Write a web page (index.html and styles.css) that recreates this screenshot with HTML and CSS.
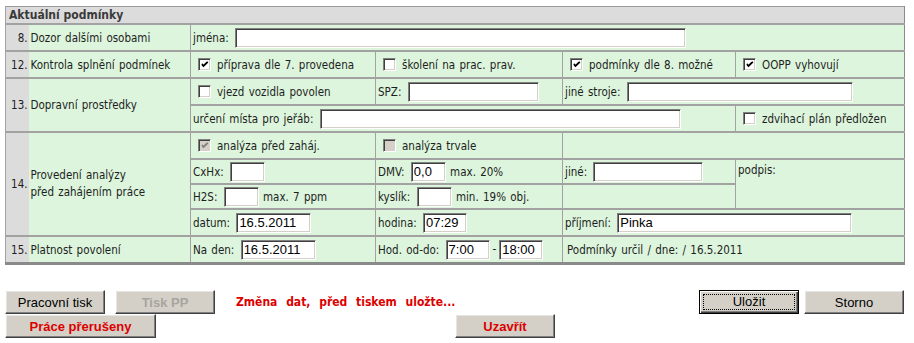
FILE: index.html
```html
<!DOCTYPE html>
<html lang="cs">
<head>
<meta charset="utf-8">
<title>Aktuální podmínky</title>
<link rel="stylesheet" href="styles.css">
</head>
<body>
<table class="form">
  <colgroup>
    <col class="c-num"><col class="c-lbl"><col class="c-1"><col class="c-2"><col class="c-3"><col class="c-4">
  </colgroup>
  <tr><td class="hdr" colspan="6">Aktuální podmínky</td></tr>
  <tr class="r">
    <td class="num">8.</td><td class="lbl">Dozor dalšími osobami</td>
    <td colspan="4">jména: <input class="in w-jmena" type="text"></td>
  </tr>
  <tr class="r">
    <td class="num">12.</td><td class="lbl">Kontrola splnění podmínek</td>
    <td><span class="cb"><svg viewBox="0 0 7 7" class="ck"><path d="M0 2.5 L2 4.5 L6.5 0"/></svg></span><span class="cbl">příprava dle 7. provedena</span></td>
    <td><span class="cb"></span><span class="cbl">školení na prac. prav.</span></td>
    <td><span class="cb"><svg viewBox="0 0 7 7" class="ck"><path d="M0 2.5 L2 4.5 L6.5 0"/></svg></span><span class="cbl">podmínky dle 8. možné</span></td>
    <td><span class="cb"><svg viewBox="0 0 7 7" class="ck"><path d="M0 2.5 L2 4.5 L6.5 0"/></svg></span><span class="cbl">OOPP vyhovují</span></td>
  </tr>
  <tr class="r">
    <td class="num" rowspan="2">13.</td><td class="lbl" rowspan="2">Dopravní prostředky</td>
    <td><span class="cb"></span><span class="cbl">vjezd vozidla povolen</span></td>
    <td>SPZ: <input class="in w-spz" type="text"></td>
    <td colspan="2">jiné stroje: <input class="in w-stroje" type="text"></td>
  </tr>
  <tr class="r">
    <td colspan="3">určení místa pro jeřáb: <input class="in w-jerab" type="text"></td>
    <td><span class="cb"></span><span class="cbl">zdvihací plán předložen</span></td>
  </tr>
  <tr class="r">
    <td class="num" rowspan="4">14.</td><td class="lbl two" rowspan="4">Provedení analýzy<br>před zahájením práce</td>
    <td><span class="cb dis"><svg viewBox="0 0 7 7" class="ck"><path d="M0 2.5 L2 4.5 L6.5 0"/></svg></span><span class="cbl">analýza před zaháj.</span></td>
    <td><span class="cb dis"></span><span class="cbl">analýza trvale</span></td>
    <td colspan="2"></td>
  </tr>
  <tr class="r s">
    <td>CxHx: <input class="in w-sm" type="text"></td>
    <td>DMV: <input class="in w-sm" type="text" value="0,0"> max. 20%</td>
    <td>jiné: <input class="in w-jine" type="text"></td>
    <td class="top" rowspan="2">podpis:</td>
  </tr>
  <tr class="r s">
    <td>H2S: <input class="in w-sm" type="text"> max. 7 ppm</td>
    <td>kyslík: <input class="in w-sm" type="text"> min. 19% obj.</td>
    <td></td>
  </tr>
  <tr class="r">
    <td>datum: <input class="in w-date" type="text" value="16.5.2011"></td>
    <td>hodina: <input class="in w-time" type="text" value="07:29"></td>
    <td colspan="2">příjmení: <input class="in w-prij" type="text" value="Pinka"></td>
  </tr>
  <tr class="r last">
    <td class="num">15.</td><td class="lbl">Platnost povolení</td>
    <td>Na den: <input class="in w-date" type="text" value="16.5.2011"></td>
    <td>Hod. od-do: <input class="in w-time" type="text" value="7:00"><span class="dash">-</span><input class="in w-time" type="text" value="18:00"></td>
    <td colspan="2"><span class="info">Podmínky určil / dne: / 16.5.2011</span></td>
  </tr>
</table>

<div class="actions">
  <div class="row1">
    <div class="left">
      <button class="btn" type="button">Pracovní tisk</button>
      <button class="btn bold disabled" type="button">Tisk PP</button>
      <span class="msg">Změna dat, před tiskem uložte...</span>
    </div>
    <div class="right">
      <button class="btn focus" type="button"><span class="focusbox">Uložit</span></button>
      <button class="btn" type="button">Storno</button>
    </div>
  </div>
  <div class="row2">
    <button class="btn bold red wide" type="button">Práce přerušeny</button>
    <button class="btn bold red" type="button">Uzavřít</button>
  </div>
</div>
</body>
</html>
```

FILE: styles.css
```css
body {
  margin: 6px 5px;
  background: #ffffff;
  font-family: "DejaVu Sans", sans-serif;
  font-stretch: condensed;
  font-size: 11.5px;
  color: #1e1e1e;
}

.form {
  width: 899px;
  table-layout: fixed;
  border-collapse: collapse;
  background: #dcf5dc;
  word-spacing: 1px;
  border-top: 1px solid #9a9a9a;
  border-left: 1px solid #9a9a9a;
  border-right: 1px solid #8a8a8a;
  border-bottom: 3px solid #8a8a8a;
}

.c-num { width: 23px; }
.c-lbl { width: 162px; }
.c-1 { width: 185px; }
.c-2 { width: 187px; }
.c-3 { width: 173px; }
.c-4 { width: 169px; }

.form td {
  padding: 0 2px;
  border-top: 2px solid #a2a2a2;
  border-left: 1px solid #a2a2a2;
  white-space: nowrap;
  vertical-align: middle;
}

.form td.hdr {
  background: #dcdcdc;
  border-top: 0;
  height: 16px;
  padding: 0 3px;
  font-weight: bold;
  font-size: 12px;
  word-spacing: 0;
  color: #3a3a3a;
}

.form .r td { height: 25px; }
.form .r.s td { height: 23px; }

.form td.num {
  background: #dcdcdc;
  text-align: right;
  padding: 0 1px 0 0;
}

.form td.lbl {
  border-left: 0;
  padding-left: 2px;
}

.form td.two { line-height: 17px; }

.form td.top { vertical-align: top; padding-top: 3px; }

.in {
  box-sizing: border-box;
  height: 20px;
  margin: 0 0 0 2px;
  padding: 0 2px;
  vertical-align: middle;
  background: #ffffff;
  border: 1px solid;
  border-color: #808080 #ffffff #ffffff #808080;
  box-shadow: inset 1px 1px 0 #404040, inset -1px -1px 0 #d4d0c8;
  font-family: "Liberation Sans", Arial, sans-serif;
  font-stretch: normal;
  font-size: 13px;
  word-spacing: 0;
  color: #000;
}

.w-jmena { width: 451px; }
.w-spz { width: 131px; }
.w-stroje { width: 226px; }
.w-jerab { width: 361px; }
.w-sm { width: 35px; }
.w-jine { width: 110px; }
.w-date { width: 75px; }
.w-time { width: 44px; }
.w-prij { width: 235px; }

.dash { padding: 0 1px 0 3px; }
.info { padding-left: 2px; }

.cb {
  display: inline-block;
  box-sizing: border-box;
  width: 13px;
  height: 13px;
  margin: 0 6px 0 5px;
  padding: 2px 0 0 2px;
  vertical-align: -2px;
  background: #ffffff;
  border: 1px solid;
  border-color: #808080 #ffffff #ffffff #808080;
  box-shadow: inset 1px 1px 0 #404040, inset -1px -1px 0 #d4d0c8;
  line-height: 0;
}

.ck {
  display: block;
  width: 7px;
  height: 7px;
  fill: none;
  stroke: #000;
  stroke-width: 1.8;
  stroke-linecap: butt;
  transform: translate(0.5px, 0.5px);
}

.cb.dis { background: #d4d0c8; }
.cb.dis .ck { stroke: #808080; }

.actions {
  margin-top: 25px;
  width: 899px;
}

.row1 {
  display: flex;
  justify-content: space-between;
  align-items: center;
}

.left, .right {
  display: flex;
  align-items: center;
}

.left .btn + .btn { margin-left: 10px; }
.right .btn + .btn { margin-left: 5px; }

.row2 {
  display: grid;
  grid-template-columns: 450px auto;
  justify-content: start;
}

.btn {
  box-sizing: border-box;
  width: 100px;
  height: 24px;
  margin: 0;
  padding: 0;
  background: #d4d0c8;
  border: 1px solid;
  border-color: #ffffff #404040 #404040 #ffffff;
  box-shadow: inset -1px -1px 0 #808080, inset 1px 1px 0 #e8e6e2;
  font-family: "Liberation Sans", Arial, sans-serif;
  font-stretch: normal;
  font-size: 13px;
  color: #000;
}

.btn.wide { width: 151px; }
.btn.bold { font-weight: bold; }
.btn.red { color: #dc0000; }
.btn.disabled { color: #a8a59e; }

.btn.focus {
  border: 1px solid #000;
  box-shadow: inset 1px 1px 0 #ffffff, inset -1px -1px 0 #404040, inset -2px -2px 0 #808080;
  padding: 3px;
}

.focusbox {
  display: block;
  height: 100%;
  box-sizing: border-box;
  border: 1px dotted #000;
  line-height: 14px;
}

.msg {
  margin-left: 21px;
  font-weight: bold;
  font-size: 12px;
  color: #dc0000;
  word-spacing: 5px;
}
```
